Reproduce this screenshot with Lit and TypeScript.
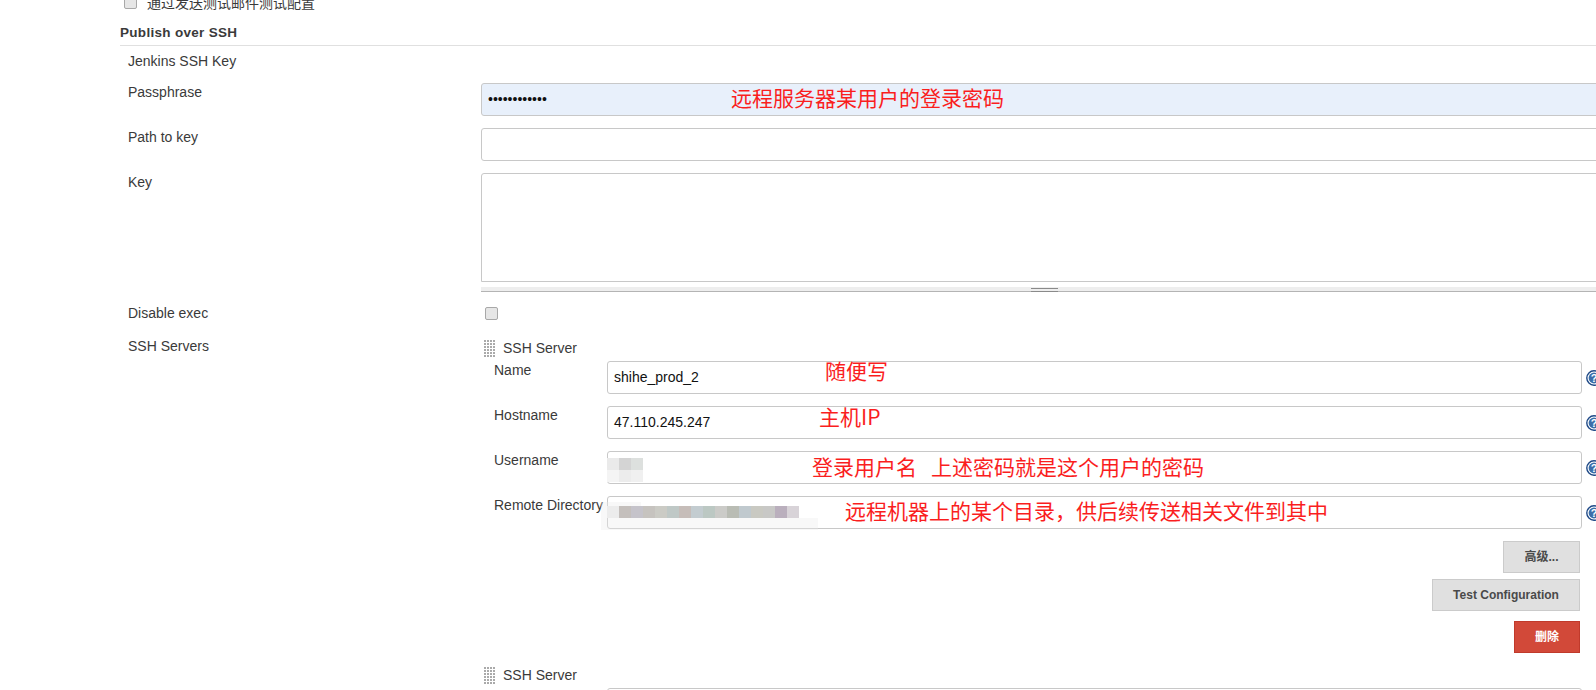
import { LitElement, html, css, svg } from "lit";
import { customElement } from "lit/decorators.js";

const helpIcon = svg`<svg class="help" viewBox="0 0 16 16" width="16" height="16"><circle cx="8" cy="8" r="7.2" fill="#fff" stroke="#204a87" stroke-width="1.4"/><circle cx="8" cy="8" r="5.4" fill="#3d6ea8"/><text x="8" y="12" text-anchor="middle" font-family="Liberation Sans" font-weight="700" font-size="11" fill="#fff">?</text></svg>`;

const userBlur = [
  ["#eaeaea", "#d4d4d4", "#dde0de"],
  ["#f4f4f4", "#ececec", "#f0f0f0"],
];
const dirBlur = ["#ececec", "#c4bfbc", "#c5c3ca", "#c6c3bf", "#cbcbc5", "#bfc8c6", "#c6bdb9", "#c3ccd0", "#bcc8c3", "#cbcbc8", "#b9bcb4", "#c0c9ce", "#c9c9c2", "#c8c8c6", "#baafbd", "#d8d3d8"];

@customElement("app-root")
export class AppRoot extends LitElement {
  static styles = css`
    :host {
      display: block;
      position: relative;
      width: 1596px;
      height: 690px;
      overflow: hidden;
      background: #fff;
      font-family: "Liberation Sans", "Noto Sans CJK SC", sans-serif;
      font-size: 14px;
      color: #3a3a3a;
    }
    .page { padding-left: 120px; width: 1488px; margin-top: -10px; }
    .top { display: flex; align-items: center; gap: 10px; padding-left: 4px; height: 24px; }
    .cb {
      width: 13px; height: 13px; box-sizing: border-box; flex: none;
      border: 1px solid #a8a8a8; border-radius: 2px; background: #e6e6e6;
    }
    .section {
      font-weight: 700; font-size: 13.5px; height: 20px; line-height: 20px; margin-top: 9px; padding-bottom: 2px;
      border-bottom: 1px solid #e0e0e0; letter-spacing: 0.3px;
    }
    .row { display: grid; grid-template-columns: 353px 1fr; padding-left: 8px; }
    .label { line-height: 18px; }
    .row.jk { margin-top: 5px; height: 32px; }
    .row.jk .label { line-height: 20px; }
    .row.pass { height: 45px; }
    .input {
      box-sizing: border-box; height: 33px; border: 1px solid #c8c8c8; border-radius: 3px;
      background: #fff; padding-left: 6px; line-height: 31px; color: #111; font-size: 14px;
    }
    .input.filled { background: #e8f0fb; }
    .textarea {
      box-sizing: border-box; height: 109px; border: 1px solid #c8c8c8; border-radius: 3px 3px 0 0; background: #fff;
    }
    .grip {
      height: 4px; margin-top: 5px; background: #eee; border-bottom: 1px solid #b4b4b4; display: flex; justify-content: center;
    }
    .grip i { display: block; width: 27px; height: 4px; margin-top: 1px; border-top: 1px solid #8a8a8a; border-bottom: 1px solid #8a8a8a; box-sizing: border-box; }
    .row.key { height: 130px; }
    .row.disable { height: 33px; }
    .row.disable .label, .row.servers > .label { line-height: 20px; }
    .row.disable .cb { margin: 4px 0 0 4px; }
    .server-head { display: flex; align-items: center; gap: 7px; height: 20px; padding-left: 3px; margin-top: 2px; }
    .drag {
      width: 12px; height: 17px;
      background-image: radial-gradient(circle at 1px 1px, #aaa 1px, transparent 1px);
      background-size: 3px 3px;
    }
    .fields { display: grid; grid-template-columns: 113px 975px 21px; row-gap: 12px; padding: 3px 0 0 13px; width: 1109px; }
    .fields .label { line-height: 16px; white-space: nowrap; padding-top: 1px; }
    .help { margin: 9px 0 0 4px; display: block; }
    .actions { display: flex; flex-direction: column; align-items: flex-end; gap: 6px; width: 1099px; margin-top: 12px; }
    .btn {
      box-sizing: border-box; height: 32px; line-height: 30px; text-align: center; font-size: 12px; font-weight: 700;
      background: #e0e0e0; border: 1px solid #cbcbcb; color: #4a4a4a;
    }
    .btn.adv { width: 77px; }
    .btn.test { width: 148px; }
    .btn.del { width: 66px; margin-top: 4px; background: #d24939; border-color: #c03a2b; color: #fff; }
    .server2 { margin-top: 12px; }
    .server-input { margin: 3px 0 0 126px; width: 975px; }
    .note {
      position: absolute; color: #fa1e1e; font-family: "Noto Sans CJK SC", sans-serif; font-size: 21px; line-height: 24px; white-space: nowrap;
    }
    .n1 { left: 731px; top: 85px; }
    .n2 { left: 825px; top: 358px; }
    .n3 { left: 819px; top: 404px; }
    .n4 { left: 812px; top: 454px; }
    .n5 { left: 845px; top: 498px; }
    .mosaic { position: absolute; display: grid; grid-auto-rows: 12px; grid-auto-flow: row; }
    .mosaic-row { display: flex; }
    .mosaic-row i { display: block; width: 12px; height: 12px; }
    .m-user { left: 607px; top: 458px; }
    .m-dir { left: 607px; top: 506px; }
    .smear { position: absolute; background: rgba(235, 235, 235, 0.35); }
    .s1 { left: 601px; top: 518px; width: 217px; height: 12px; }
    .s2 { left: 601px; top: 502px; width: 40px; height: 4px; }
    .s3 { left: 601px; top: 506px; width: 6px; height: 12px; }
  `;

  render() {
    return html`
      <div class="page">
        <div class="top"><div class="cb"></div><span>通过发送测试邮件测试配置</span></div>
        <div class="section">Publish over SSH</div>
        <div class="row jk"><div class="label">Jenkins SSH Key</div><div></div></div>
        <div class="row pass"><div class="label">Passphrase</div><div class="input filled">••••••••••••</div></div>
        <div class="row pass"><div class="label">Path to key</div><div class="input"></div></div>
        <div class="row key"><div class="label">Key</div><div><div class="textarea"></div><div class="grip"><i></i></div></div></div>
        <div class="row disable"><div class="label">Disable exec</div><div><div class="cb"></div></div></div>
        <div class="row servers">
          <div class="label">SSH Servers</div>
          <div>
            <div class="server-head"><div class="drag"></div><span>SSH Server</span></div>
            <div class="fields">
              <div class="label">Name</div><div class="input">shihe_prod_2</div>${helpIcon}
              <div class="label">Hostname</div><div class="input">47.110.245.247</div>${helpIcon}
              <div class="label">Username</div><div class="input"></div>${helpIcon}
              <div class="label">Remote Directory</div><div class="input"></div>${helpIcon}
            </div>
            <div class="actions">
              <div class="btn adv">高级...</div>
              <div class="btn test">Test Configuration</div>
              <div class="btn del">删除</div>
            </div>
            <div class="server-head server2"><div class="drag"></div><span>SSH Server</span></div>
            <div class="input server-input"></div>
          </div>
        </div>
      </div>
      <div class="mosaic m-user">
        ${userBlur.map((r) => html`<div class="mosaic-row">${r.map((c) => html`<i style="background:${c}"></i>`)}</div>`)}
      </div>
      <div class="smear s1"></div><div class="smear s2"></div><div class="smear s3"></div>
      <div class="mosaic m-dir">
        <div class="mosaic-row">${dirBlur.map((c) => html`<i style="background:${c}"></i>`)}</div>
      </div>
      <div class="note n1">远程服务器某用户的登录密码</div>
      <div class="note n2">随便写</div>
      <div class="note n3">主机IP</div>
      <div class="note n4">登录用户名&nbsp;&nbsp;&nbsp;上述密码就是这个用户的密码</div>
      <div class="note n5">远程机器上的某个目录，供后续传送相关文件到其中</div>
    `;
  }
}
